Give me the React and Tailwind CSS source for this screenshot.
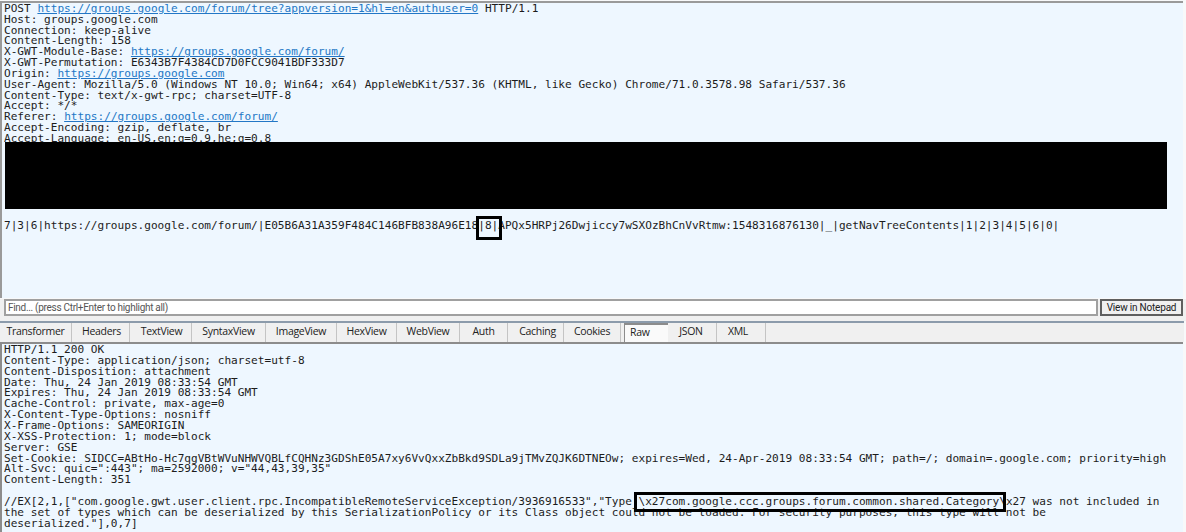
import React from 'react'

const REQUEST = [
  <>POST <Link>https://groups.google.com/forum/tree?appversion=1&amp;hl=en&amp;authuser=0</Link> HTTP/1.1</>,
  'Host: groups.google.com',
  'Connection: keep-alive',
  'Content-Length: 158',
  <>X-GWT-Module-Base: <Link>https://groups.google.com/forum/</Link></>,
  'X-GWT-Permutation: E6343B7F4384CD7D0FCC9041BDF333D7',
  <>Origin: <Link>https://groups.google.com</Link></>,
  'User-Agent: Mozilla/5.0 (Windows NT 10.0; Win64; x64) AppleWebKit/537.36 (KHTML, like Gecko) Chrome/71.0.3578.98 Safari/537.36',
  'Content-Type: text/x-gwt-rpc; charset=UTF-8',
  'Accept: */*',
  <>Referer: <Link>https://groups.google.com/forum/</Link></>,
  'Accept-Encoding: gzip, deflate, br',
  'Accept-Language: en-US,en;q=0.9,he;q=0.8',
]

const RESPONSE = [
  'HTTP/1.1 200 OK',
  'Content-Type: application/json; charset=utf-8',
  'Content-Disposition: attachment',
  'Date: Thu, 24 Jan 2019 08:33:54 GMT',
  'Expires: Thu, 24 Jan 2019 08:33:54 GMT',
  'Cache-Control: private, max-age=0',
  'X-Content-Type-Options: nosniff',
  'X-Frame-Options: SAMEORIGIN',
  'X-XSS-Protection: 1; mode=block',
  'Server: GSE',
  'Set-Cookie: SIDCC=ABtHo-Hc7qgVBtWVuNHWVQBLfCQHNz3GDShE05A7xy6VvQxxZbBkd9SDLa9jTMvZQJK6DTNEOw; expires=Wed, 24-Apr-2019 08:33:54 GMT; path=/; domain=.google.com; priority=high',
  'Alt-Svc: quic=":443"; ma=2592000; v="44,43,39,35"',
  'Content-Length: 351',
  '\u00a0',
  <>//EX[2,1,["com.google.gwt.user.client.rpc.IncompatibleRemoteServiceException/3936916533","Type <Marked className="-left-[5px] right-0 -top-[3px] -bottom-[4px]">\x27com.google.ccc.groups.forum.common.shared.Category\</Marked>x27 was not included in</>,
  'the set of types which can be deserialized by this SerializationPolicy or its Class object could not be loaded. For security purposes, this type will not be',
  'deserialized."],0,7]',
]

// label, width, classes for the label offset inside the tab
const TABS = [
  ['Transformer', 'w-[72px]', ''],
  ['Headers', 'w-[58px]', 'pl-[2px]'],
  ['TextView', 'w-[62px]', 'pl-[2px]'],
  ['SyntaxView', 'w-[74px]', ''],
  ['ImageView', 'w-[71px]', ''],
  ['HexView', 'w-[60px]', ''],
  ['WebView', 'w-[63px]', ''],
  ['Auth', 'w-[48px]', ''],
  ['Caching', 'w-[56px]', 'pl-[4px]'],
  ['Cookies', 'w-[57px]', ''],
]

function Link({ children }) {
  return <span className="text-[#2377c6] underline">{children}</span>
}

// black rectangle drawn over the text in the original capture
function Marked({ children, className }) {
  return (
    <span className="relative">
      {children}
      <span className={`absolute border-[3px] border-black ${className}`} />
    </span>
  )
}

function Lines({ rows, height }) {
  return rows.map((row, i) => <div key={i} className={height}>{row}</div>)
}

function Tab({ label, width, extra }) {
  return (
    <div className={`flex items-center justify-center border-r border-[#c4c4c4] pb-[2px] ${width} ${extra}`}>
      {label}
    </div>
  )
}

export default function App() {
  return (
    <div className="h-[532px] w-[1186px] overflow-hidden bg-[#f8f9fa] font-['DejaVu_Sans_Mono',monospace] text-[11.1px] leading-[10.83px] whitespace-pre text-[#1c1c1c]">
      <div className="pt-px pr-[3px]">
        <div className="h-[297px] border-t-2 border-l-2 border-[#9a9a9a] bg-[#eef7ff] pl-[2px]">
          <div className="h-[139px] overflow-hidden pt-[1px]">
            <Lines rows={REQUEST} height="h-[10.83px]" />
          </div>
          <div className="ml-px h-[67px] w-[1162px] bg-black" />
          <div className="pt-[12px]">
            7|3|6|https://groups.google.com/forum/|E05B6A31A359F484C146BFB838A96E18<Marked className="-left-[2px] -right-[4px] -top-[3px] -bottom-[8px]">|8|</Marked>APQx5HRPj26Dwjiccy7wSXOzBhCnVvRtmw:1548316876130|_|getNavTreeContents|1|2|3|4|5|6|0|
          </div>
        </div>
      </div>

      <div className="mt-px flex h-[17px] items-stretch gap-[2px] bg-[#f0f0f0] pr-[3px] pl-[4px] font-['Roboto',sans-serif]">
        <div className="flex flex-1 items-center border-2 border-[#a0a0a0] bg-white pl-[2px] text-[10px] leading-none tracking-[-0.3px] text-[#555]">
          Find... (press Ctrl+Enter to highlight all)
        </div>
        <button className="w-[83px] border-2 border-[#5f5f5f] bg-[#f0f0f0] text-[10px] leading-none tracking-[-0.2px] text-[#222]">
          View in Notepad
        </button>
      </div>

      <div className="h-[5px] bg-[#f0f0f0]" />

      <div className="mr-[2px] flex h-[21px] border-t-2 border-[#8c9bab] bg-[#f0f0f0] font-['Open_Sans',sans-serif] text-[10.5px] leading-none tracking-[-0.3px] text-[#222]">
        {TABS.map(([label, width, extra]) => (
          <Tab key={label} label={label} width={width} extra={extra} />
        ))}
        <div className="ml-[3px] flex w-[44px] items-center border-t-2 border-l border-[#8c8c8c] bg-[#fafafa] pb-[2px] pl-[5px]">Raw</div>
        <Tab label="JSON" width="w-[49px]" extra="pr-[2px]" />
        <Tab label="XML" width="w-[49px]" extra="pr-[6px]" />
      </div>

      <div className="mr-[3px] h-[190px] border-t-2 border-l-2 border-[#8c8c8c] bg-[#eef7ff] pt-px pl-[2px]">
        <Lines rows={RESPONSE} height="h-[10.87px]" />
      </div>
    </div>
  )
}
